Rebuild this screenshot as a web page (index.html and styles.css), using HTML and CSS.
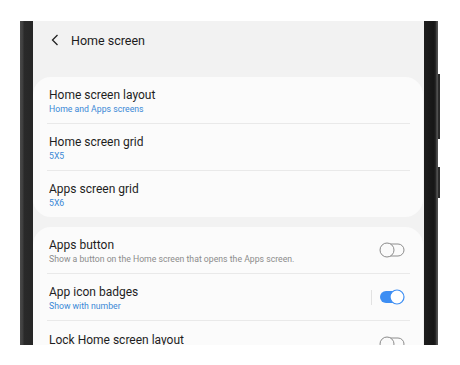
FILE: index.html
```html
<!DOCTYPE html>
<html>
<head>
<meta charset="utf-8">
<link rel="stylesheet" href="styles.css">
</head>
<body>
<div class="phone">
  <div class="bezel-left"></div>
  <div class="screen">
    <header class="topbar">
      <svg class="back" width="8" height="12" viewBox="0 0 8 12"><polyline points="6.5,1 1.5,6 6.5,11" fill="none" stroke="#222" stroke-width="1.3"/></svg>
      <span class="title">Home screen</span>
    </header>
    <section class="card">
      <div class="row">
        <div class="text"><div class="label">Home screen layout</div><div class="sub blue">Home and Apps screens</div></div>
      </div>
      <div class="row">
        <div class="text"><div class="label">Home screen grid</div><div class="sub blue">5X5</div></div>
      </div>
      <div class="row">
        <div class="text"><div class="label">Apps screen grid</div><div class="sub blue">5X6</div></div>
      </div>
    </section>
    <section class="card">
      <div class="row">
        <div class="text"><div class="label">Apps button</div><div class="sub grey">Show a button on the Home screen that opens the Apps screen.</div></div>
        <svg class="toggle" width="26" height="16" viewBox="0 0 26 16"><rect x="1.5" y="2" width="23.5" height="12" rx="6" fill="none" stroke="#8d8d8d" stroke-width="1"/><circle cx="8" cy="8" r="7" fill="#fafafa" stroke="#8d8d8d" stroke-width="1"/></svg>
      </div>
      <div class="row">
        <div class="text"><div class="label">App icon badges</div><div class="sub blue">Show with number</div></div>
        <span class="vsep"></span>
        <svg class="toggle" width="26" height="16" viewBox="0 0 26 16"><rect x="1" y="2" width="23.5" height="12" rx="6" fill="#3d8ef3"/><circle cx="18" cy="8" r="7" fill="#ffffff" stroke="#3d8ef3" stroke-width="1.2"/></svg>
      </div>
      <div class="row">
        <div class="text single"><div class="label">Lock Home screen layout</div></div>
        <svg class="toggle" width="26" height="16" viewBox="0 0 26 16"><rect x="1.5" y="2" width="23.5" height="12" rx="6" fill="none" stroke="#8d8d8d" stroke-width="1"/><circle cx="8" cy="8" r="7" fill="#fafafa" stroke="#8d8d8d" stroke-width="1"/></svg>
      </div>
    </section>
  </div>
  <div class="bezel-right"></div>
  <span class="side-btn btn-a"></span>
  <span class="side-btn btn-b"></span>
</div>
</body>
</html>
```

FILE: styles.css
```css
html, body {
  margin: 0;
  padding: 0;
  background: #ffffff;
}
body {
  width: 460px;
  height: 365px;
  overflow: hidden;
  font-family: Roboto, "Noto Sans", sans-serif;
}
.phone {
  position: relative;
  display: flex;
  margin: 21px 0 0 20px;
  width: 418px;
  height: 324px;
}
.bezel-left {
  width: 13px;
  background: linear-gradient(to right, #4a4a4a 0, #3c3c3c 3px, #2a2a2a 4px, #262626 100%);
}
.bezel-right {
  width: 14px;
  background: linear-gradient(to right, #1e1e1e 0, #161616 10px, #2a2a2a 12px, #5a5a5a 13px, #444 14px);
}
.side-btn {
  position: absolute;
  left: 418px;
  width: 2px;
  background: #2b2b2b;
}
.btn-a { top: 53px; height: 65px; }
.btn-b { top: 146px; height: 31px; }
.screen {
  width: 391px;
  height: 324px;
  overflow: hidden;
  background: #f2f2f2;
}
.topbar {
  height: 56px;
  display: flex;
  align-items: center;
  padding: 0 0 18px 18px;
  box-sizing: border-box;
}
.back {
  display: block;
}
.title {
  margin-left: 12px;
  font-size: 12.5px;
  line-height: 15px;
  color: #1c1c1c;
}
.card {
  background: #fbfbfb;
  border-radius: 18px;
  margin-bottom: 10px;
  margin-right: 1px;
}
.row {
  display: flex;
  align-items: center;
  height: 46px;
  margin: 0 13px 0 14px;
  padding: 0 5px 0 2px;
  border-bottom: 1px solid #e9e9e9;
}
.row:last-child {
  border-bottom: none;
}
.text {
  flex: 1;
  min-width: 0;
  padding-top: 2px;
}
.text.single {
  padding-bottom: 10px;
}
.label {
  font-size: 12px;
  line-height: 15px;
  color: #1e1e1e;
}
.sub {
  font-size: 8.7px;
  line-height: 11px;
  margin-top: 1px;
}
.blue { color: #3a88d6; }
.grey { color: #8c8c8c; }
.toggle {
  display: block;
  flex: none;
}
.vsep {
  width: 1px;
  height: 15px;
  background: #e2e2e2;
  margin-right: 7px;
}
```
